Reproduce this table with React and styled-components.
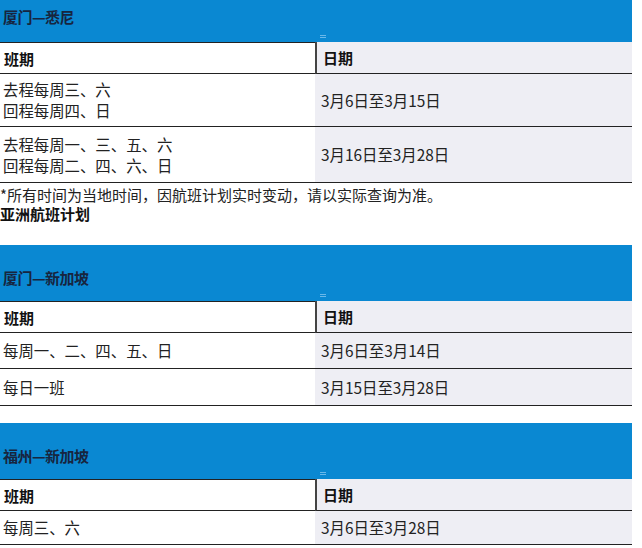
import React from "react";
import styled, { createGlobalStyle } from "styled-components";

const Global = createGlobalStyle`
  html, body { margin: 0; padding: 0; background: #ffffff; }
  body { font-family: "Noto Sans CJK SC", "Noto Sans", sans-serif; color: #222; }
`;

const Page = styled.div`
  width: 632px;
  display: flex;
  flex-direction: column;
`;

const Section = styled.section`
  display: flex;
  flex-direction: column;
  margin-bottom: ${(p) => p.$gap || 0}px;
`;

const Banner = styled.div`
  position: relative;
  height: ${(p) => p.$h}px;
  background: #0a88d2;
  display: flex;
  align-items: flex-end;
  padding: 0 0 ${(p) => p.$pb}px 3px;
  box-sizing: border-box;
  color: #17253f;
  font-size: 15px;
  font-weight: 700;
  letter-spacing: -0.5px;
`;

const Tick = styled.span`
  position: absolute;
  left: 320px;
  bottom: 4px;
  width: 6px;
  height: 3px;
  border-top: 1px solid #6ab8ea;
  border-bottom: 1px solid #6ab8ea;
  box-sizing: border-box;
`;

const Table = styled.div`
  display: grid;
  grid-template-columns: 315px 317px;
  border-bottom: 1.5px solid #222;
`;

const HeadCell = styled.div`
  height: 32px;
  box-sizing: border-box;
  display: flex;
  align-items: center;
  padding-left: ${(p) => (p.$right ? 6 : 4)}px;
  font-size: 15px;
  font-weight: 700;
  color: #111;
  background: ${(p) => (p.$right ? "#eeeef4" : "#ffffff")};
  border-top: ${(p) => (p.$right ? "none" : "1.5px solid #222")};
  border-bottom: 1.5px solid #222;
  border-left: ${(p) => (p.$right ? "2px solid #444" : "none")};
`;

const Cell = styled.div`
  height: ${(p) => p.$h}px;
  box-sizing: border-box;
  display: flex;
  flex-direction: column;
  justify-content: center;
  padding-left: ${(p) => (p.$right ? 6 : 3)}px;
  font-size: 15.4px;
  line-height: 21px;
  color: #222;
  background: ${(p) => (p.$right ? "#eeeef4" : "#ffffff")};
  border-top: ${(p) => (p.$first ? "none" : "1.5px solid #222")};
`;

const Note = styled.p`
  margin: 2px 0 0 0;
  font-size: 15px;
  line-height: 19px;
  color: #222;
  white-space: nowrap;
`;

const Heading = styled.h3`
  margin: 0 0 21px 0;
  font-size: 15px;
  line-height: 20px;
  font-weight: 700;
  color: #111;
`;

function FlightTable({ title, bannerH, bannerPb, rows, gap }) {
  return (
    <Section $gap={gap}>
      <Banner $h={bannerH} $pb={bannerPb}>
        {title}
        <Tick />
      </Banner>
      <Table>
        <HeadCell>班期</HeadCell>
        <HeadCell $right>日期</HeadCell>
        {rows.map((r, i) => (
          <React.Fragment key={i}>
            <Cell $h={r.h} $first={i === 0}>
              {r.left.map((l) => (
                <span key={l}>{l}</span>
              ))}
            </Cell>
            <Cell $h={r.h} $first={i === 0} $right>
              {r.right}
            </Cell>
          </React.Fragment>
        ))}
      </Table>
    </Section>
  );
}

export default function App() {
  return (
    <>
      <Global />
      <Page>
        <FlightTable
          title="厦门—悉尼"
          bannerH={42}
          bannerPb={15}
          rows={[
            { h: 52, left: ["去程每周三、六", "回程每周四、日"], right: "3月6日至3月15日" },
            { h: 56, left: ["去程每周一、三、五、六", "回程每周二、四、六、日"], right: "3月16日至3月28日" },
          ]}
        />
        <Note>*所有时间为当地时间，因航班计划实时变动，请以实际查询为准。</Note>
        <Heading>亚洲航班计划</Heading>
        <FlightTable
          title="厦门—新加坡"
          bannerH={56}
          bannerPb={13}
          gap={17}
          rows={[
            { h: 35, left: ["每周一、二、四、五、日"], right: "3月6日至3月14日" },
            { h: 37, left: ["每日一班"], right: "3月15日至3月28日" },
          ]}
        />
        <FlightTable
          title="福州—新加坡"
          bannerH={56}
          bannerPb={13}
          rows={[{ h: 33, left: ["每周三、六"], right: "3月6日至3月28日" }]}
        />
      </Page>
    </>
  );
}
